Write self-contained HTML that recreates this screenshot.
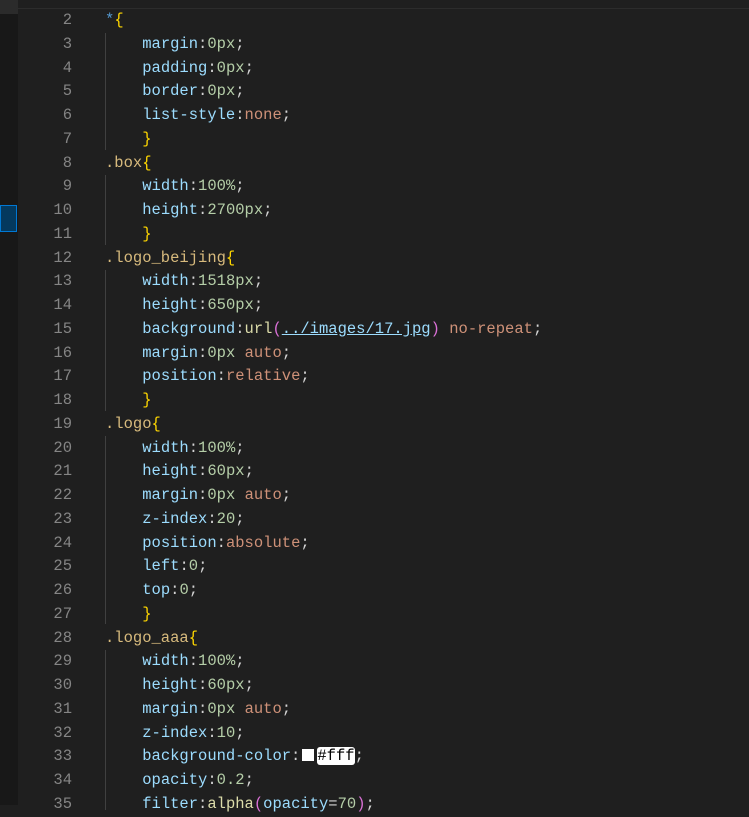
<!DOCTYPE html>
<html><head><meta charset="utf-8"><style>
html,body{margin:0;padding:0;width:749px;height:805px;overflow:hidden;background:#1f1f1f;}
#side{position:absolute;left:0;top:0;width:18px;height:805px;background:#181818;}
#sidetop{position:absolute;left:0;top:0;width:18px;height:14px;background:#2b2b2b;}
#sel{position:absolute;left:0;top:205px;width:17px;height:27px;background:#04395e;border:1px solid #0078d4;box-sizing:border-box;}
#cur{position:absolute;left:18px;top:-16px;width:731px;height:24px;border-bottom:1px solid #2c2c2c;}
#code{position:absolute;left:0;top:-14.6px;width:749px;font-family:"Liberation Mono",monospace;font-size:15.5px;line-height:23.75px;}
.l{position:relative;height:23.75px;}
.n{position:absolute;left:20px;width:52px;text-align:right;color:#858585;}
.c{position:absolute;left:105px;color:#d4d4d4;white-space:pre;}
.g{position:absolute;left:105px;width:1px;background:#404040;}
.p{color:#9cdcfe}.v{color:#b5cea8}.k{color:#ce9178}.s{color:#d7ba7d}.b{color:#ffd700}.st{color:#569cd6}.f{color:#dcdcaa}.pa{color:#da70d6}.u{color:#9cdcfe;text-decoration:underline}.cm{color:#6a9955}
.sw{display:inline-block;width:12px;height:12px;background:#fff;margin:0 3px 0 2px;vertical-align:-1px;}
.hl{background:#fff;color:#000;border-radius:3px;}
</style></head><body>
<div id="side"></div><div id="sidetop"></div><div id="sel"></div><div id="cur"></div>
<div class="g" style="top:33px;height:117px"></div>
<div class="g" style="top:175px;height:70px"></div>
<div class="g" style="top:270px;height:141px"></div>
<div class="g" style="top:436px;height:188px"></div>
<div class="g" style="top:650px;height:160px"></div>
<div id="code"><div class="l"><span class="n">1</span><span class="c cm">/* CSS Document */</span></div><div class="l"><span class="n">2</span><span class="c"><span class="st">*</span><span class="b">{</span></span></div><div class="l"><span class="n">3</span><span class="c">    <span class="p">margin</span>:<span class="v">0px</span>;</span></div><div class="l"><span class="n">4</span><span class="c">    <span class="p">padding</span>:<span class="v">0px</span>;</span></div><div class="l"><span class="n">5</span><span class="c">    <span class="p">border</span>:<span class="v">0px</span>;</span></div><div class="l"><span class="n">6</span><span class="c">    <span class="p">list-style</span>:<span class="k">none</span>;</span></div><div class="l"><span class="n">7</span><span class="c">    <span class="b">}</span></span></div><div class="l"><span class="n">8</span><span class="c"><span class="s">.box</span><span class="b">{</span></span></div><div class="l"><span class="n">9</span><span class="c">    <span class="p">width</span>:<span class="v">100%</span>;</span></div><div class="l"><span class="n">10</span><span class="c">    <span class="p">height</span>:<span class="v">2700px</span>;</span></div><div class="l"><span class="n">11</span><span class="c">    <span class="b">}</span></span></div><div class="l"><span class="n">12</span><span class="c"><span class="s">.logo_beijing</span><span class="b">{</span></span></div><div class="l"><span class="n">13</span><span class="c">    <span class="p">width</span>:<span class="v">1518px</span>;</span></div><div class="l"><span class="n">14</span><span class="c">    <span class="p">height</span>:<span class="v">650px</span>;</span></div><div class="l"><span class="n">15</span><span class="c">    <span class="p">background</span>:<span class="f">url</span><span class="pa">(</span><span class="u">../images/17.jpg</span><span class="pa">)</span> <span class="k">no-repeat</span>;</span></div><div class="l"><span class="n">16</span><span class="c">    <span class="p">margin</span>:<span class="v">0px</span> <span class="k">auto</span>;</span></div><div class="l"><span class="n">17</span><span class="c">    <span class="p">position</span>:<span class="k">relative</span>;</span></div><div class="l"><span class="n">18</span><span class="c">    <span class="b">}</span></span></div><div class="l"><span class="n">19</span><span class="c"><span class="s">.logo</span><span class="b">{</span></span></div><div class="l"><span class="n">20</span><span class="c">    <span class="p">width</span>:<span class="v">100%</span>;</span></div><div class="l"><span class="n">21</span><span class="c">    <span class="p">height</span>:<span class="v">60px</span>;</span></div><div class="l"><span class="n">22</span><span class="c">    <span class="p">margin</span>:<span class="v">0px</span> <span class="k">auto</span>;</span></div><div class="l"><span class="n">23</span><span class="c">    <span class="p">z-index</span>:<span class="v">20</span>;</span></div><div class="l"><span class="n">24</span><span class="c">    <span class="p">position</span>:<span class="k">absolute</span>;</span></div><div class="l"><span class="n">25</span><span class="c">    <span class="p">left</span>:<span class="v">0</span>;</span></div><div class="l"><span class="n">26</span><span class="c">    <span class="p">top</span>:<span class="v">0</span>;</span></div><div class="l"><span class="n">27</span><span class="c">    <span class="b">}</span></span></div><div class="l"><span class="n">28</span><span class="c"><span class="s">.logo_aaa</span><span class="b">{</span></span></div><div class="l"><span class="n">29</span><span class="c">    <span class="p">width</span>:<span class="v">100%</span>;</span></div><div class="l"><span class="n">30</span><span class="c">    <span class="p">height</span>:<span class="v">60px</span>;</span></div><div class="l"><span class="n">31</span><span class="c">    <span class="p">margin</span>:<span class="v">0px</span> <span class="k">auto</span>;</span></div><div class="l"><span class="n">32</span><span class="c">    <span class="p">z-index</span>:<span class="v">10</span>;</span></div><div class="l"><span class="n">33</span><span class="c">    <span class="p">background-color</span>:<span class="sw"></span><span class="hl">#fff</span>;</span></div><div class="l"><span class="n">34</span><span class="c">    <span class="p">opacity</span>:<span class="v">0.2</span>;</span></div><div class="l"><span class="n">35</span><span class="c">    <span class="p">filter</span>:<span class="f">alpha</span><span class="pa">(</span><span class="p">opacity</span>=<span class="v">70</span><span class="pa">)</span>;</span></div></div>
</body></html>
